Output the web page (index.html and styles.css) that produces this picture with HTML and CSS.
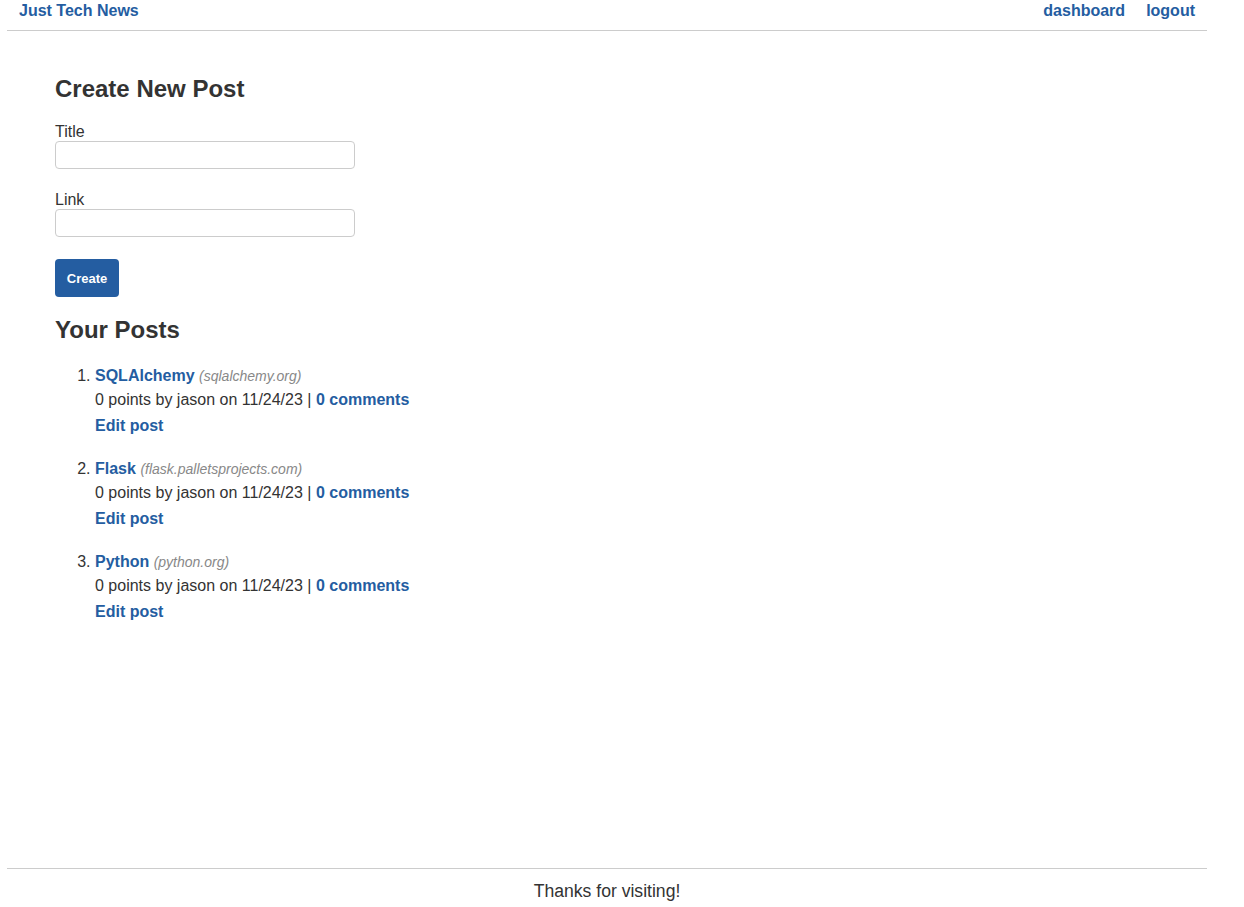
FILE: index.html
```html
<!DOCTYPE html>
<html lang="en">
<head>
<meta charset="utf-8">
<title>Just Tech News</title>
<link rel="stylesheet" href="styles.css">
</head>
<body>
<div class="wrapper">
  <header class="site-header">
    <a class="brand" href="#">Just Tech News</a>
    <nav class="nav">
      <a href="#">dashboard</a>
      <a href="#">logout</a>
    </nav>
  </header>
  <main class="main">
    <section>
      <h2 class="heading">Create New Post</h2>
      <form class="post-form">
        <div class="field">
          <label for="post-title">Title</label>
          <input id="post-title" type="text">
        </div>
        <div class="field">
          <label for="post-url">Link</label>
          <input id="post-url" type="text">
        </div>
        <button class="btn" type="button">Create</button>
      </form>
    </section>
    <section>
      <h2 class="heading heading-posts">Your Posts</h2>
      <ol class="post-list">
        <li>
          <div class="post-title"><a href="#">SQLAlchemy</a> <span class="domain">(sqlalchemy.org)</span></div>
          <div class="meta">0 points by jason on 11/24/23 | <a href="#">0 comments</a></div>
          <div class="edit"><a href="#">Edit post</a></div>
        </li>
        <li>
          <div class="post-title"><a href="#">Flask</a> <span class="domain">(flask.palletsprojects.com)</span></div>
          <div class="meta">0 points by jason on 11/24/23 | <a href="#">0 comments</a></div>
          <div class="edit"><a href="#">Edit post</a></div>
        </li>
        <li>
          <div class="post-title"><a href="#">Python</a> <span class="domain">(python.org)</span></div>
          <div class="meta">0 points by jason on 11/24/23 | <a href="#">0 comments</a></div>
          <div class="edit"><a href="#">Edit post</a></div>
        </li>
      </ol>
    </section>
  </main>
  <footer class="site-footer">Thanks for visiting!</footer>
</div>
</body>
</html>
```
FILE: styles.css
```css
html, body {
  margin: 0;
  padding: 0;
  background: #fff;
}
body {
  font-family: "Liberation Sans", Arial, sans-serif;
  font-size: 16px;
  color: #333;
}
a {
  color: #245da1;
  font-weight: bold;
  text-decoration: none;
}
.wrapper {
  width: 1200px;
  margin-left: 7px;
  min-height: 100vh;
  display: flex;
  flex-direction: column;
}
.site-header {
  display: flex;
  justify-content: space-between;
  align-items: flex-start;
  padding: 2px 12px 0;
  height: 28px;
  border-bottom: 1px solid #ccc;
}
.nav {
  display: flex;
  gap: 21px;
}
.main {
  flex: 1;
  padding: 24px 48px 0;
}
.heading {
  font-size: 24px;
  font-weight: bold;
  margin: 20px 0 19px;
  color: #333;
}
.heading-posts {
  margin-top: 19px;
  margin-bottom: 20px;
}
.post-form {
  display: flex;
  flex-direction: column;
  align-items: flex-start;
}
.field {
  display: flex;
  flex-direction: column;
  margin-bottom: 21px;
}
.field label {
  line-height: 19px;
}
.field input {
  width: 300px;
  height: 28px;
  box-sizing: border-box;
  border: 1px solid #ccc;
  border-radius: 4px;
  padding: 2px 6px;
  font-family: inherit;
  font-size: 14px;
}
.btn {
  margin-top: 1px;
  background: #245da1;
  color: #fff;
  border: none;
  border-radius: 4px;
  font-family: inherit;
  font-weight: bold;
  font-size: 13px;
  width: 64px;
  height: 38px;
  padding: 0;
  cursor: pointer;
}
.post-list {
  margin: 0;
  padding-left: 40px;
}
.post-list li {
  line-height: 23px;
  margin-bottom: 20px;
}
.domain {
  font-style: italic;
  font-size: 14px;
  color: #888;
}
.edit {
  margin-top: 3px;
}
.site-footer {
  border-top: 1px solid #ccc;
  text-align: center;
  font-size: 17.6px;
  padding: 12px 0 5px;
  color: #333;
}
```
